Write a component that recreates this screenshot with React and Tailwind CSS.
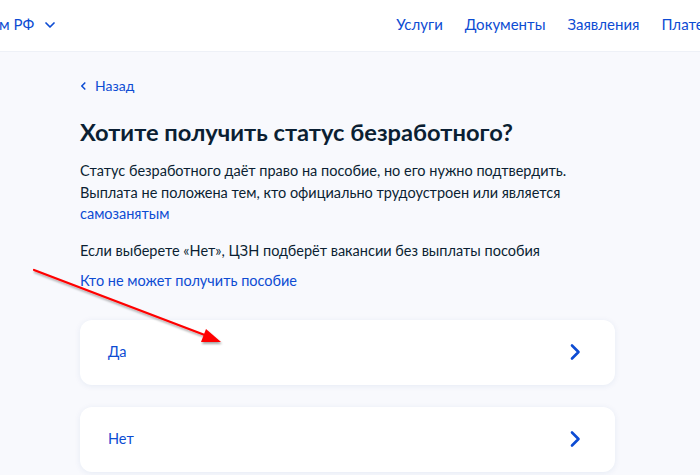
import React from "react";

const ChevronRight = ({ className }) => (
  <svg viewBox="0 0 24 24" className={className} fill="none">
    <path d="M9 5.5L15.5 12L9 18.5" stroke="currentColor" strokeWidth="2.6" strokeLinecap="round" strokeLinejoin="round" />
  </svg>
);

const Option = ({ label }) => (
  <button className="flex h-[65px] w-full items-center justify-between rounded-xl bg-white pl-7 pr-[28px] text-left shadow-[0_1px_6px_rgba(14,60,140,0.08)]">
    <span className="text-[14.5px] text-[#0d4cd3]">{label}</span>
    <ChevronRight className="h-6 w-6 text-[#0d4cd3]" />
  </button>
);

export default function App() {
  return (
    <div className="relative h-[475px] w-[700px] overflow-hidden bg-[#f8f9fd] font-['Lato','Noto_Sans',sans-serif] text-[#0b1f33]">
      {/* header */}
      <header className="flex h-[52px] items-center justify-between border-b border-[#eef1f7] bg-white">
        <div className="-ml-[1px] flex items-center gap-2 pb-[2px] text-[15px] text-[#0d4cd3]">
          <span>м РФ</span>
          <svg viewBox="0 0 24 24" className="h-4 w-4" fill="none">
            <path d="M6 9l6 6 6-6" stroke="currentColor" strokeWidth="2.6" strokeLinecap="round" strokeLinejoin="round" />
          </svg>
        </div>
        <nav className="-mr-[24px] flex items-center gap-[22px] pb-[2px] text-[15px] text-[#0d4cd3]">
          <span>Услуги</span>
          <span>Документы</span>
          <span>Заявления</span>
          <span>Платежи</span>
        </nav>
      </header>

      <main className="ml-[80px] w-[535px]">
        <a className="mt-[23px] flex items-center gap-[8px] text-[14px] text-[#0d4cd3]">
          <svg viewBox="0 0 8 12" className="h-[12px] w-[7px]" fill="none">
            <path d="M5.5 2.5L2 6l3.5 3.5" stroke="currentColor" strokeWidth="1.8" strokeLinecap="round" strokeLinejoin="round" />
          </svg>
          Назад
        </a>
        <h1 className="mt-[20px] text-[23.7px] font-bold leading-[32px]">Хотите получить статус безработного?</h1>
        <p className="mt-[12px] text-[14.5px] leading-[21.5px]">
          Статус безработного даёт право на пособие, но его нужно подтвердить. Выплата не положена тем, кто официально трудоустроен или является{" "}
          <span className="text-[#0d4cd3]">самозанятым</span>
        </p>
        <p className="mt-[15px] text-[14.5px] leading-[21.5px]">
          Если выберете «Нет», ЦЗН подберёт вакансии без выплаты пособия
        </p>
        <p className="mt-[9px] text-[14.5px] leading-[21.5px] text-[#0d4cd3]">Кто не может получить пособие</p>

        <div className="mt-[28px] flex flex-col gap-[22px]">
          <Option label="Да" />
          <Option label="Нет" />
        </div>
      </main>

      {/* annotation arrow */}
      <svg className="pointer-events-none absolute left-0 top-0" width="700" height="475">
        <defs>
          <filter id="sh" x="-20%" y="-20%" width="140%" height="140%">
            <feDropShadow dx="1" dy="2" stdDeviation="1.2" floodColor="#000" floodOpacity="0.35" />
          </filter>
        </defs>
        <g filter="url(#sh)">
          <line x1="34" y1="270" x2="210" y2="337" stroke="#f00" strokeWidth="2.2" strokeLinecap="round" />
          <path d="M221 342 L201 342 L206 329 Z" fill="#f00" />
        </g>
      </svg>
    </div>
  );
}
